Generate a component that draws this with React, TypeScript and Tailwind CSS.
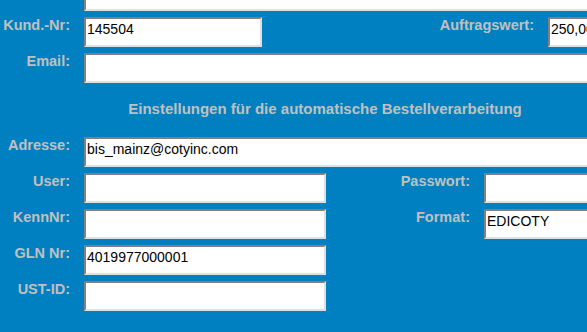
import React from "react";

const labelCls =
  "text-right text-[14.5px] font-bold leading-[16px] text-[#c0c0c0] shrink-0 whitespace-nowrap";
const inputCls =
  "ml-[14px] h-[30px] shrink-0 bg-white border-2 border-t-[#808080] border-l-[#808080] border-b-[#e0e0e0] border-r-[#e0e0e0] pl-[1px] pt-[2px] text-[14px] leading-[16px] text-black whitespace-nowrap overflow-hidden";

function Label({ children, w }: { children?: React.ReactNode; w: string }) {
  return <div className={`${labelCls} ${w}`}>{children}</div>;
}

export default function App() {
  return (
    <div className="w-[587px] h-[332px] overflow-hidden bg-[#0080c0] font-['Liberation_Sans',Arial,sans-serif]">
      <div className="w-[650px] -mt-[19px] flex flex-col gap-[6px]">
        {/* partially visible top row */}
        <div className="flex">
          <Label w="w-[70px]"></Label>
          <div className={`${inputCls} w-[566px]`}></div>
        </div>
        <div className="flex">
          <Label w="w-[70px]">Kund.-Nr:</Label>
          <div className={`${inputCls} w-[178px]`}>145504</div>
          <Label w="w-[272px]">Auftragswert:</Label>
          <div className={`${inputCls} w-[90px]`}>250,00</div>
        </div>
        <div className="flex">
          <Label w="w-[70px]">Email:</Label>
          <div className={`${inputCls} w-[566px]`}></div>
        </div>
        <div className="pt-[12px] pb-[14px] text-center text-[15px] font-bold leading-[16px] text-[#c0c0c0]">
          Einstellungen für die automatische Bestellverarbeitung
        </div>
        <div className="flex">
          <Label w="w-[70px]">Adresse:</Label>
          <div className={`${inputCls} w-[566px]`}>bis_mainz@cotyinc.com</div>
        </div>
        <div className="flex">
          <Label w="w-[70px]">User:</Label>
          <div className={`${inputCls} w-[242px]`}></div>
          <Label w="w-[144px]">Passwort:</Label>
          <div className={`${inputCls} w-[150px]`}></div>
        </div>
        <div className="flex">
          <Label w="w-[70px]">KennNr:</Label>
          <div className={`${inputCls} w-[242px]`}></div>
          <Label w="w-[144px]">Format:</Label>
          <div className={`${inputCls} w-[150px]`}>EDICOTY</div>
        </div>
        <div className="flex">
          <Label w="w-[70px]">GLN Nr:</Label>
          <div className={`${inputCls} w-[242px]`}>4019977000001</div>
        </div>
        <div className="flex">
          <Label w="w-[70px]">UST-ID:</Label>
          <div className={`${inputCls} w-[242px]`}></div>
        </div>
      </div>
    </div>
  );
}
